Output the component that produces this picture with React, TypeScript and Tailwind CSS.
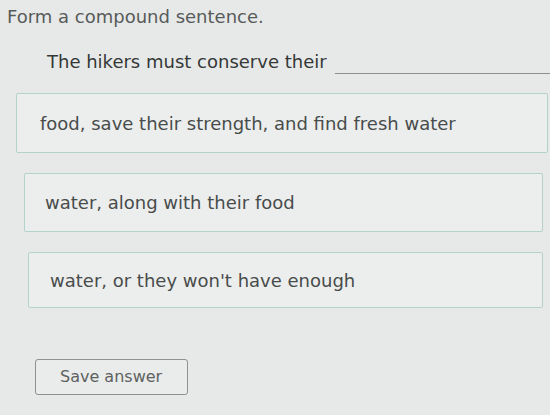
import React from 'react';

const options = [
  { text: 'food, save their strength, and find fresh water', box: 'ml-[16px] mr-[2px] h-[60px] pl-[23px]' },
  { text: 'water, along with their food', box: 'ml-[24px] mr-[7px] h-[59px] pl-[20px]' },
  { text: "water, or they won't have enough", box: 'ml-[28px] mr-[7px] h-[56px] pl-[21px]' },
];

const App = () => {
  return (
    <div className="h-[415px] w-[550px] overflow-hidden bg-[#e7e9e8] font-['DejaVu_Sans',sans-serif] text-[#3e4241]">
      <div className="pl-[7px] pt-[6px] text-[18px] leading-[22px] text-[#575b5a]">
        Form a compound sentence.
      </div>
      <div className="mt-[23px] flex items-end pl-[47px] text-[18px] leading-[22px] text-[#343837]">
        <span>The hikers must conserve their</span>
        <span className="-mb-[1px] ml-[8px] h-[1px] flex-1 bg-[#8c908f]" />
      </div>
      <div className="mt-[20px] flex flex-col gap-[20px]">
        {options.map((o) => (
          <div
            key={o.text}
            className={`flex items-center rounded-[2px] border border-[#b3d2cc] bg-[#eceeed] text-[18px] text-[#484c4b] ${o.box}`}
          >
            {o.text}
          </div>
        ))}
      </div>
      <button className="ml-[35px] mt-[51px] flex h-[36px] w-[153px] items-center rounded-[3px] border border-[#8d9190] bg-[#eaeceb] pl-[24px] text-[16px] text-[#5d6160]">
        Save answer
      </button>
    </div>
  );
};

export default App;
